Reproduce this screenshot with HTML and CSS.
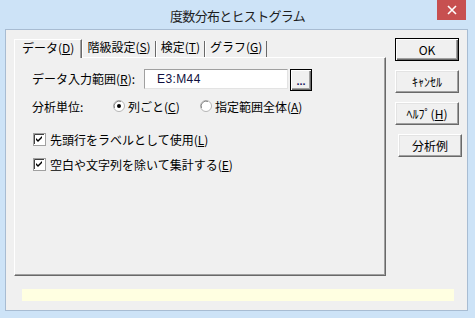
FILE: index.html
```html
<!DOCTYPE html>
<html>
<head>
    <title>度数分布とヒストグラム</title>
    <link rel="stylesheet" href="styles.css">
</head>
<body>
    <div class="window">
        <div class="titlebar">
            <span></span>
            <span class="title">度数分布とヒストグラム</span>
            <span class="close">
                <svg width="10" height="10" viewBox="0 0 10 10">
                    <path d="M1 1 L9 9 M9 1 L1 9" stroke="#ffffff" stroke-width="1.6" fill="none"/>
                </svg>
            </span>
        </div>
        <div class="client">
            <div class="main">
                <div class="tabbox">
                    <div class="tabs">
                        <div class="tab active">データ(<u>D</u>)</div>
                        <div class="tab">階級設定(<u>S</u>)</div>
                        <div class="tab">検定(<u>T</u>)</div>
                        <div class="tab">グラフ(<u>G</u>)</div>
                    </div>
                    <div class="panel">
                        <div class="row range-row">
                            <span class="label range-label">データ入力範囲(<u>R</u>):</span>
                            <div class="input">E3:M44</div>
                            <div class="browse">...</div>
                        </div>
                        <div class="row unit-row">
                            <span class="label unit-label">分析単位:</span>
                            <span class="option option-first">
                                <svg class="radio" width="12" height="12" viewBox="0 0 12 12">
                                    <circle cx="6" cy="6" r="5.5" fill="#ffffff" stroke="#b4b4b4"/>
                                    <path d="M1.5 8 A5 5 0 0 1 8 1.5" stroke="#8a8a8a" fill="none"/>
                                    <circle cx="6" cy="6" r="2" fill="#000000"/>
                                </svg>
                                <span>列ごと(<u>C</u>)</span>
                            </span>
                            <span class="option">
                                <svg class="radio" width="12" height="12" viewBox="0 0 12 12">
                                    <circle cx="6" cy="6" r="5.5" fill="#ffffff" stroke="#b4b4b4"/>
                                    <path d="M1.5 8 A5 5 0 0 1 8 1.5" stroke="#8a8a8a" fill="none"/>
                                </svg>
                                <span>指定範囲全体(<u>A</u>)</span>
                            </span>
                        </div>
                        <div class="row check-row first-check">
                            <svg class="check" width="13" height="13" viewBox="0 0 13 13">
                                <rect x="0.5" y="0.5" width="12" height="12" fill="#ffffff" stroke="#a0a0a0"/>
                                <path d="M1.5 11 V1.5 H11" stroke="#404040" fill="none"/>
                                <polygon points="3,5 5,7 9,3 9,5 5,9 3,7" fill="#000000"/>
                            </svg>
                            <span>先頭行をラベルとして使用(<u>L</u>)</span>
                        </div>
                        <div class="row check-row">
                            <svg class="check" width="13" height="13" viewBox="0 0 13 13">
                                <rect x="0.5" y="0.5" width="12" height="12" fill="#ffffff" stroke="#a0a0a0"/>
                                <path d="M1.5 11 V1.5 H11" stroke="#404040" fill="none"/>
                                <polygon points="3,5 5,7 9,3 9,5 5,9 3,7" fill="#000000"/>
                            </svg>
                            <span>空白や文字列を除いて集計する(<u>E</u>)</span>
                        </div>
                    </div>
                </div>
                <div class="buttons">
                    <div class="btn default">OK</div>
                    <div class="btn">ｷｬﾝｾﾙ</div>
                    <div class="btn">ﾍﾙﾌﾟ(<u>H</u>)</div>
                    <div class="btn sample">分析例</div>
                </div>
            </div>
            <div class="status"></div>
        </div>
    </div>
</body>
</html>
```

FILE: styles.css
```css
body {
    margin: 0;
    font-family: "Noto Sans CJK JP", "Liberation Sans", sans-serif;
    font-size: 12px;
    font-weight: normal;
    color: #000000;
}

.window {
    width: 475px;
    height: 318px;
    background-color: #cde3f7;
    display: flex;
    flex-direction: column;
}

/* title bar */
.titlebar {
    height: 29px;
    display: grid;
    grid-template-columns: 1fr auto 1fr;
    align-items: start;
}

.title {
    font-size: 13px;
    letter-spacing: -0.7px;
    line-height: 16px;
    padding-top: 8px;
    color: #1e1e1e;
}

.close {
    justify-self: end;
    width: 29px;
    height: 20px;
    margin-right: 9px;
    background-color: #c75050;
    display: flex;
    align-items: center;
    justify-content: center;
}

/* client area */
.client {
    flex: 1;
    margin: 0 7px 7px 5px;
    border: 1px solid #a8bcd2;
    background-color: #f0f0f0;
    padding: 8px 0 0 8px;
}

.main {
    display: flex;
    gap: 9px;
}

.tabbox {
    width: 372px;
    margin-top: 1px;
}

.tabs {
    display: flex;
    height: 18px;
    position: relative;
    z-index: 1;
}

.tab {
    margin-top: 2px;
    height: 16px;
    line-height: 11px;
    padding: 0 4px;
    border-left: 1px solid #ffffff;
    border-right: 1px solid #696969;
    white-space: nowrap;
}

.tab.active {
    margin-top: 0;
    height: 18px;
    line-height: 15px;
    padding: 0 7px;
    border-top: 1px solid #ffffff;
    background-color: #f0f0f0;
    box-shadow: inset -1px 0 #a0a0a0;
}

.panel {
    height: 219px;
    box-sizing: border-box;
    border: 1px solid;
    border-color: #ffffff #696969 #696969 #ffffff;
    box-shadow: inset -1px -1px #a0a0a0;
    padding: 11px 0 0 17px;
}

.row {
    display: flex;
    align-items: center;
    height: 22px;
}

.range-row {
    align-items: flex-start;
}

.range-label {
    width: 112px;
    line-height: 20px;
}

.input {
    width: 144px;
    height: 20px;
    box-sizing: border-box;
    border: 1px solid;
    border-color: #a0a0a0 #e3e3e3 #e3e3e3 #a0a0a0;
    background-color: #ffffff;
    padding-left: 12px;
    line-height: 18px;
    letter-spacing: 0.4px;
    font-family: "Liberation Sans", sans-serif;
    color: #101040;
}

.browse {
    margin-left: 2px;
    width: 22px;
    height: 22px;
    box-sizing: border-box;
    border: 1px solid #000000;
    background-color: #f0f0f0;
    box-shadow: inset 1px 1px #ffffff, inset -1px -1px #696969, inset -2px -2px #a0a0a0;
    font-family: "Liberation Sans", sans-serif;
    font-size: 11px;
    line-height: 22px;
    font-weight: bold;
    text-align: center;
    color: #202060;
}

.unit-row {
    margin-top: 4px;
}

.unit-label {
    width: 81px;
}

.option {
    display: flex;
    align-items: center;
    gap: 3px;
}

.option-first {
    width: 87px;
}

.check-row {
    gap: 4px;
    margin-top: 3px;
}

.first-check {
    margin-top: 11px;
}

.check {
    margin-left: 1px;
}

/* right hand buttons */
.buttons {
    display: flex;
    flex-direction: column;
    gap: 9px;
}

.btn {
    width: 64px;
    height: 23px;
    box-sizing: border-box;
    text-align: center;
    line-height: 21px;
    font-size: 12px;
    color: #000000;
    background-color: #f0f0f0;
    border: 1px solid;
    border-color: #ffffff #696969 #696969 #ffffff;
    box-shadow: inset -1px -1px #a0a0a0, inset 1px 1px #e3e3e3;
}

.btn.default {
    border-color: #000000;
    box-shadow: inset 1px 1px #ffffff, inset -1px -1px #696969, inset -2px -2px #a0a0a0;
}

.btn.sample {
    margin-left: 3px;
}

.status {
    margin: 13px 0 0 8px;
    width: 432px;
    height: 12px;
    background-color: #ffffe1;
}
```
